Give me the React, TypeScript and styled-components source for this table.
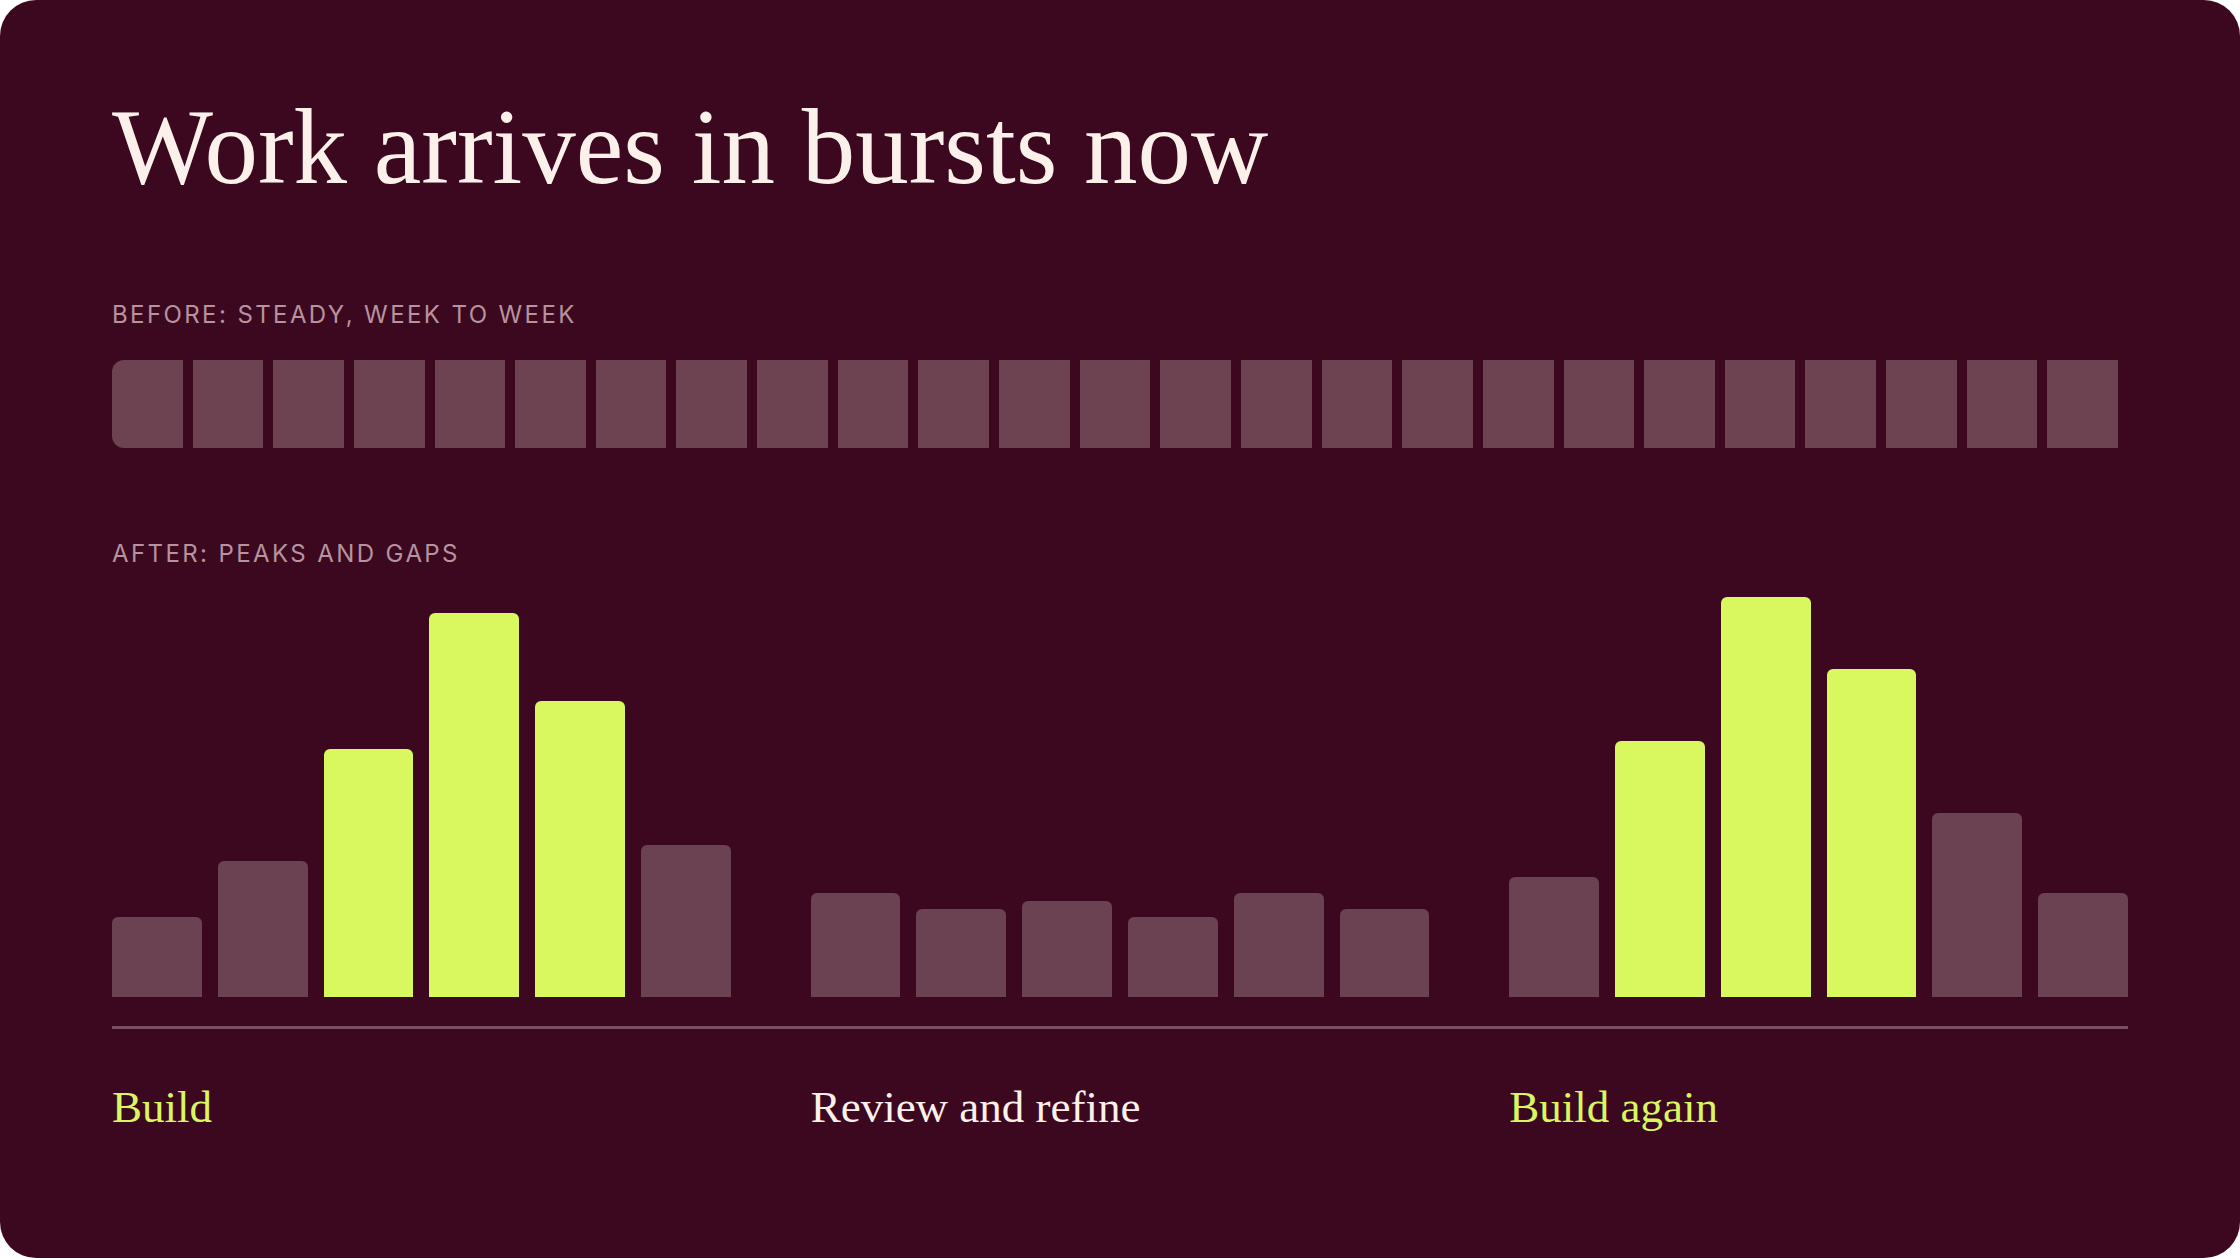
import React from "react";
import styled, { createGlobalStyle } from "styled-components";

type Phase = {
  label: string;
  accent: boolean;
  bars: { h: number; hot?: boolean }[];
};

const phases: Phase[] = [
  {
    label: "Build",
    accent: true,
    bars: [{ h: 20 }, { h: 34 }, { h: 62, hot: true }, { h: 96, hot: true }, { h: 74, hot: true }, { h: 38 }],
  },
  {
    label: "Review and refine",
    accent: false,
    bars: [{ h: 26 }, { h: 22 }, { h: 24 }, { h: 20 }, { h: 26 }, { h: 22 }],
  },
  {
    label: "Build again",
    accent: true,
    bars: [{ h: 30 }, { h: 64, hot: true }, { h: 100, hot: true }, { h: 82, hot: true }, { h: 46 }, { h: 26 }],
  },
];

const weeks = Array.from({ length: 25 }, (_, i) => i);

const App: React.FC = () => {
  return (
    <>
      <GlobalStyle />
      <Card>
        <Title>Work arrives in bursts now</Title>

        <SectionLabel>Before: steady, week to week</SectionLabel>
        <Strip>
          {weeks.map((w) => (
            <Week key={w} />
          ))}
        </Strip>

        <SectionLabel $spaced>After: peaks and gaps</SectionLabel>
        <Chart>
          {phases.map((p) => (
            <Group key={p.label}>
              {p.bars.map((b, i) => (
                <Bar key={i} $hot={!!b.hot} style={{ height: `${b.h}%` }} />
              ))}
            </Group>
          ))}
        </Chart>
        <Baseline />
        <Labels>
          {phases.map((p) => (
            <PhaseLabel key={p.label} $accent={p.accent}>
              {p.label}
            </PhaseLabel>
          ))}
        </Labels>
      </Card>
    </>
  );
};

export default App;

const GlobalStyle = createGlobalStyle`
  html, body {
    margin: 0;
    padding: 0;
    background: #ffffff;
  }
  * {
    box-sizing: border-box;
  }
`;

const Card = styled.div`
  width: 100vw;
  height: 100vh;
  display: flex;
  flex-direction: column;
  padding: 94px 112px 0;
  background-color: #3c0820;
  border-radius: 36px;
  overflow: hidden;
`;

const Title = styled.h1`
  margin: 0;
  font-family: "Liberation Serif", "Times New Roman", serif;
  font-size: 107px;
  font-weight: 400;
  line-height: 1;
  color: #fcf1ea;
`;

const SectionLabel = styled.div<{ $spaced?: boolean }>`
  margin-top: ${(p) => (p.$spaced ? "94px" : "102px")};
  font-family: Inter, "Liberation Sans", sans-serif;
  font-size: 24px;
  line-height: 24px;
  letter-spacing: 0.1em;
  text-transform: uppercase;
  color: #b6939e;
`;

const Strip = styled.div`
  margin-top: 33px;
  height: 88px;
  display: flex;
  gap: 10px;
  padding-right: 10px;
  border-radius: 12px;
  overflow: hidden;
`;

const Week = styled.div`
  flex: 1;
  background-color: #6d4352;
`;

const Chart = styled.div`
  margin-top: 31px;
  height: 400px;
  display: grid;
  grid-template-columns: repeat(3, 1fr);
  column-gap: 80px;
`;

const Group = styled.div`
  display: flex;
  align-items: flex-end;
  gap: 16px;
`;

const Bar = styled.div<{ $hot: boolean }>`
  flex: 1;
  border-radius: 6px 6px 0 0;
  background-color: ${(p) => (p.$hot ? "#d9f860" : "#6b4251")};
`;

const Baseline = styled.div`
  margin-top: 29px;
  height: 3px;
  background-color: #7c4e63;
`;

const Labels = styled.div`
  margin-top: 56px;
  display: grid;
  grid-template-columns: repeat(3, 1fr);
  column-gap: 80px;
`;

const PhaseLabel = styled.div<{ $accent: boolean }>`
  font-family: "Liberation Serif", "Times New Roman", serif;
  font-size: 45px;
  line-height: 1;
  color: ${(p) => (p.$accent ? "#d9f860" : "#fcf1ea")};
`;
